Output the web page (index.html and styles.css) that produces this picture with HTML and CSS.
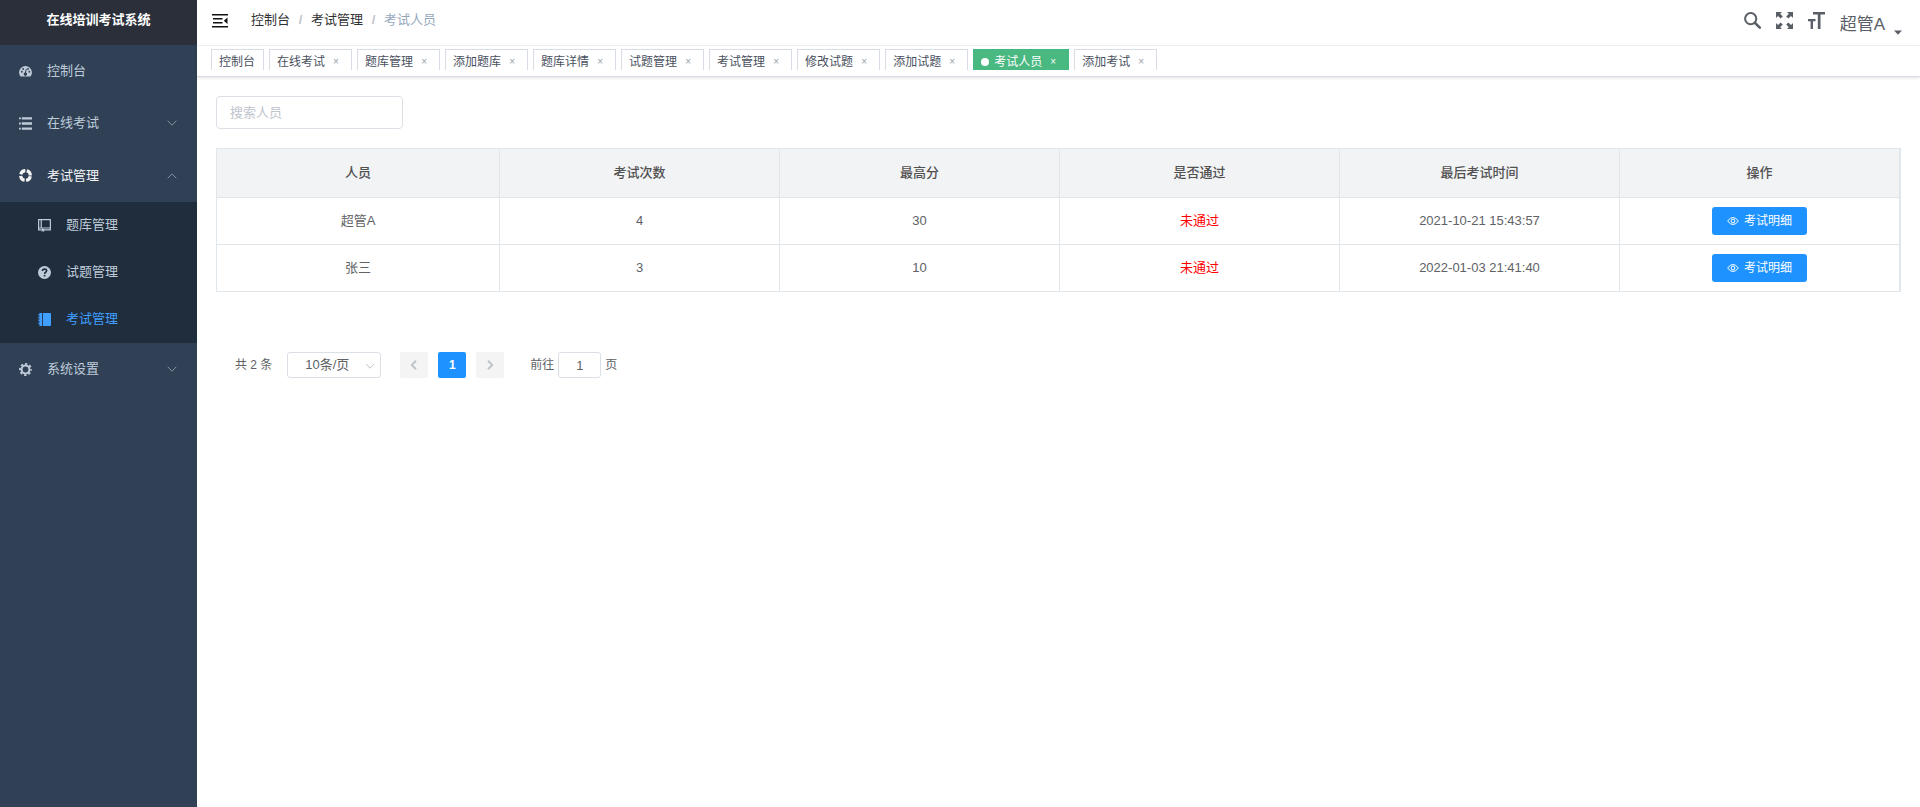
FILE: index.html
```html
<!DOCTYPE html>
<html lang="zh-CN">
<head>
<meta charset="utf-8">
<title>在线培训考试系统</title>
<link rel="stylesheet" href="styles.css">
</head>
<body>
<div class="app">
  <aside class="sidebar">
    <h1 class="logo">在线培训考试系统</h1>
    <nav class="menu">
      <a class="menu-item" href="#">
        <svg class="menu-icon" viewBox="0 0 14 14"><path fill="currentColor" fill-rule="evenodd" d="M1.6 12.2A6.9 6.9 0 1 1 12.4 12.2Q12.200 12.500 11.800 12.500H2.200Q1.800 12.500 1.600 12.200ZM2 7.300a1 1 0 1 0 2 0a1 1 0 1 0-2 0ZM3.500 4.300a1 1 0 1 0 2 0a1 1 0 1 0-2 0ZM8.700 4.300a1 1 0 1 0 2 0a1 1 0 1 0-2 0ZM10.200 7.300a1 1 0 1 0 2 0a1 1 0 1 0-2 0ZM7.500 4L6.400 8.200A1.700 1.700 0 1 0 7.600 8.300L8.300 4.200Z"/></svg>
        <span>控制台</span>
      </a>
      <a class="menu-item" href="#">
        <svg class="menu-icon" viewBox="0 0 14 14" fill="currentColor"><path d="M0 .5h2v2H0zM3 .2h11v2.600H3zM0 6h2v2H0zM3 5.700h11v2.600H3zM0 11.500h2v2H0zM3 11.200h11v2.600H3z"/></svg>
        <span>在线考试</span>
        <svg class="menu-arrow" viewBox="0 0 10 10"><path d="M.7 2.700L5 7.200L9.300 2.700"/></svg>
      </a>
      <a class="menu-item open" href="#">
        <svg class="menu-icon" viewBox="0 0 14 14"><circle cx="7" cy="7" r="5.200" fill="none" stroke="currentColor" stroke-width="3.400" stroke-dasharray="6.570 1.600" stroke-dashoffset="-0.800"/></svg>
        <span>考试管理</span>
        <svg class="menu-arrow" viewBox="0 0 10 10"><path d="M.7 7.300L5 2.800L9.300 7.300"/></svg>
      </a>
      <div class="submenu">
        <a class="menu-item" href="#">
          <svg class="menu-icon" viewBox="0 0 14 14"><path fill="none" stroke="currentColor" stroke-width="1.300" d="M4 11.800H.7V.7H13.300V9.700H.7M3.500.7V9.700M6 11.800H13.300V9.700"/><path fill="currentColor" d="M4 10.500h2.600V14L5.300 13L4 14z"/></svg>
          <span>题库管理</span>
        </a>
        <a class="menu-item" href="#">
          <svg class="menu-icon" viewBox="0 0 14 14"><circle cx="7" cy="7" r="7" fill="currentColor"/><path fill="none" stroke="#1f2d3d" stroke-width="1.700" d="M4.700 5.400Q4.800 3.400 7 3.400Q9.300 3.400 9.300 5.200Q9.300 6.200 8.200 6.800Q7.100 7.400 7.100 8.700"/><path fill="#1f2d3d" d="M6.200 9.600H8V11.300H6.200z"/></svg>
          <span>试题管理</span>
        </a>
        <a class="menu-item active" href="#">
          <svg class="menu-icon" viewBox="0 0 14 14" fill="currentColor"><path d="M5.200 0H13q1 0 1 1V13q0 1-1 1H5.200zM1.500 0H4.300V14H1.500zM0 1.700h3v1.100H0zM0 4.500h3v1.100H0zM0 7.300h3v1.100H0zM0 10.400h3v1.100H0z"/></svg>
          <span>考试管理</span>
        </a>
      </div>
      <a class="menu-item" href="#">
        <svg class="menu-icon" viewBox="0 0 14 14"><circle cx="7" cy="7" r="4.200" fill="none" stroke="currentColor" stroke-width="2.200"/><circle cx="7" cy="7" r="6" fill="none" stroke="currentColor" stroke-width="2" stroke-dasharray="2.500 2.212" stroke-dashoffset="1.250"/></svg>
        <span>系统设置</span>
        <svg class="menu-arrow" viewBox="0 0 10 10"><path d="M.7 2.700L5 7.200L9.300 2.700"/></svg>
      </a>
    </nav>
  </aside>

  <div class="main">
    <header class="navbar">
      <button class="icon-button" aria-label="收起菜单">
        <svg class="burger" viewBox="0 0 16 14"><path fill="#111" d="M0 0h16v1.500H0zM1 4h9.500v1.500H1zM1 8h9.500v1.500H1zM0 12h16v1.500H0zM15.500 3.500v6.500L11.800 6.700z"/></svg>
      </button>
      <nav class="breadcrumb" aria-label="面包屑">
        <a href="#">控制台</a><b>/</b><a href="#">考试管理</a><b>/</b><span>考试人员</span>
      </nav>
      <div class="tools">
        <button class="icon-button" aria-label="搜索">
          <svg class="tool-icon" viewBox="0 0 17 17"><circle cx="6.700" cy="6.700" r="5.600" fill="none" stroke="currentColor" stroke-width="2"/><path d="M10.800 10.800L15.800 15.600" stroke="currentColor" stroke-width="2.600" stroke-linecap="round"/></svg>
        </button>
        <button class="icon-button" aria-label="全屏">
          <svg class="tool-icon" viewBox="0 0 17 17"><path fill="currentColor" d="M0 0H6L4.200 1.800L6.800 4.400L4.600 6.600L2 4L0 6zM17 0V6L15 4L12.400 6.600L10.200 4.400L12.800 1.800L11 0zM0 17V11L2 13L4.600 10.400L6.800 12.600L4.200 15.200L6 17zM17 17H11L12.800 15.200L10.200 12.600L12.400 10.400L15 13L17 11z"/></svg>
        </button>
        <button class="icon-button" aria-label="字号">
          <svg class="tool-icon" viewBox="0 0 17 17"><path fill="currentColor" d="M5 0H17V2.500H12.500V17H9.800V2.500H5zM0 7H7.500V9.200H5V17H2.600V9.200H0z"/></svg>
        </button>
        <button class="user">超管A<svg class="caret" viewBox="0 0 8 5"><path d="M0 .5H8L4 4.800z" fill="currentColor"/></svg></button>
      </div>
    </header>

    <div class="tags-bar">
      <div class="tags">
        <a class="tag home" href="#">控制台</a>
        <a class="tag" href="#">在线考试<i>×</i></a>
        <a class="tag" href="#">题库管理<i>×</i></a>
        <a class="tag" href="#">添加题库<i>×</i></a>
        <a class="tag" href="#">题库详情<i>×</i></a>
        <a class="tag" href="#">试题管理<i>×</i></a>
        <a class="tag" href="#">考试管理<i>×</i></a>
        <a class="tag" href="#">修改试题<i>×</i></a>
        <a class="tag" href="#">添加试题<i>×</i></a>
        <a class="tag current" href="#">考试人员<i>×</i></a>
        <a class="tag" href="#">添加考试<i>×</i></a>
      </div>
    </div>

    <main class="content">
      <input class="search" type="text" placeholder="搜索人员" aria-label="搜索人员">
      <div class="table-wrap">
        <table class="table">
          <thead>
            <tr><th class="person">人员</th><th>考试次数</th><th>最高分</th><th>是否通过</th><th>最后考试时间</th><th>操作</th></tr>
          </thead>
          <tbody>
            <tr>
              <td>超管A</td><td>4</td><td>30</td><td class="fail">未通过</td><td>2021-10-21 15:43:57</td>
              <td><button class="detail"><svg viewBox="0 0 12 12"><path d="M.6 6Q6-1 11.400 6Q6 13 .6 6Z"/><circle cx="6" cy="6" r="1.900"/></svg>考试明细</button></td>
            </tr>
            <tr>
              <td>张三</td><td>3</td><td>10</td><td class="fail">未通过</td><td>2022-01-03 21:41:40</td>
              <td><button class="detail"><svg viewBox="0 0 12 12"><path d="M.6 6Q6-1 11.400 6Q6 13 .6 6Z"/><circle cx="6" cy="6" r="1.900"/></svg>考试明细</button></td>
            </tr>
          </tbody>
        </table>
      </div>

      <div class="pagination">
        <span>共 2 条</span>
        <div class="page-size">
          <select aria-label="每页条数"><option>10条/页</option></select>
          <svg viewBox="0 0 10 10"><path d="M1 3L5 7.200L9 3"/></svg>
        </div>
        <div class="pager">
          <button aria-label="上一页" disabled><svg viewBox="0 0 10 10"><path d="M7 .8L2.800 5L7 9.200"/></svg></button>
          <button class="current">1</button>
          <button aria-label="下一页" disabled><svg viewBox="0 0 10 10"><path d="M3 .8L7.200 5L3 9.200"/></svg></button>
        </div>
        <label class="jump">前往<input type="text" value="1">页</label>
      </div>
    </main>
  </div>
</div>
</body>
</html>
```
FILE: styles.css
```css
* {
  box-sizing: border-box;
}

body {
  margin: 0;
  background: #fff;
  color: #606266;
  font: 13px/20px "Liberation Sans", "Noto Sans CJK SC", sans-serif;
}

a {
  color: inherit;
  text-decoration: none;
}

button,
input,
select {
  margin: 0;
  padding: 0;
  border: 0;
  background: none;
  color: inherit;
  font: inherit;
}

svg {
  display: block;
  flex: none;
}

.app {
  display: flex;
  min-height: 100vh;
}

/* Sidebar */
.sidebar {
  flex: none;
  width: 197px;
  background: #304156;
}

.logo {
  margin: 0;
  height: 45px;
  background: #2b2f3a;
  color: #fff;
  font-size: 13px;
  line-height: 40px;
  text-align: center;
}

.menu-item {
  display: flex;
  align-items: center;
  gap: 15px;
  height: 52px;
  padding: 0 20px 0 19px;
  color: #bfcbd9;
}

.menu-item.open {
  height: 53px;
  color: #f4f4f5;
}

.menu-icon {
  width: 13px;
  height: 13px;
}

.menu-arrow {
  width: 10px;
  height: 10px;
  margin-left: auto;
  fill: none;
  stroke: #8291a3;
}

.submenu {
  background: #1f2d3d;
}

.submenu .menu-item {
  height: 47px;
  padding-bottom: 1px;
  padding-left: 38px;
}

.submenu .active {
  color: #409eff;
}

/* Top bar */
.main {
  flex: 1;
  min-width: 0;
}

.navbar {
  display: flex;
  align-items: flex-start;
  height: 46px;
  padding: 0 18px 0 15px;
  border-bottom: 1px solid #f2f3f4;
}

.icon-button {
  display: block;
  color: #5a5e66;
}

.burger {
  width: 16px;
  height: 14px;
  margin-top: 14px;
}

.breadcrumb {
  display: flex;
  margin: 10px 0 0 23px;
  color: #303133;
}

.breadcrumb b {
  margin: 0 8px;
  width: 5px;
  color: #c0c4cc;
  text-align: center;
}

.breadcrumb span {
  color: #97a8be;
}

.tools {
  display: flex;
  align-items: flex-start;
  gap: 15px;
  margin-left: auto;
}

.tool-icon {
  width: 17px;
  height: 17px;
  margin-top: 12px;
}

.user {
  display: flex;
  align-items: flex-end;
  gap: 9px;
  height: 35px;
  color: #5a5e66;
  font-size: 17px;
}

.caret {
  width: 8px;
  height: 5px;
}

/* Open page tags */
.tags-bar {
  height: 31px;
  padding: 3px 14px 0;
  border-bottom: 1px solid #d8dce5;
  box-shadow: 0 1px 3px rgba(0, 0, 0, 0.12);
}

.tags {
  display: flex;
  gap: 5px;
  height: 21px;
  overflow: hidden;
}

.tag {
  display: flex;
  align-items: center;
  flex: none;
  height: 25px;
  padding: 0 7px;
  border: 1px solid #d8dce5;
  color: #495060;
  font-size: 12px;
}

.tag.home {
  padding-right: 8px;
}

.tag i {
  width: 16px;
  margin-left: 3px;
  color: #999ea8;
  font-size: 10px;
  font-style: normal;
  text-align: center;
}

.tag.current {
  border-color: #42b983;
  background: #4ab881;
  color: #fff;
}

.tag.current i {
  color: #fff;
}

.tag.current::before {
  content: "";
  width: 8px;
  height: 8px;
  margin-right: 5px;
  border-radius: 50%;
  background: #fff;
}

/* Content */
.content {
  padding: 19px;
}

.search {
  display: block;
  width: 187px;
  height: 33px;
  padding: 0 13px;
  border: 1px solid #dcdfe6;
  border-radius: 4px;
}

.search::placeholder {
  color: #c0c4cc;
}

.table-wrap {
  margin-top: 19px;
  border: 1px solid #dfe6ec;
  border-bottom: 0;
}

.table {
  width: 100%;
  border-spacing: 0;
  table-layout: fixed;
}

.table th,
.table td {
  height: 47px;
  padding: 0;
  border-right: 1px solid #dfe6ec;
  border-bottom: 1px solid #dfe6ec;
  text-align: center;
}

.table th {
  height: 49px;
  background: #f1f3f5;
  color: #515151;
  font-weight: 500;
}

.table .person {
  width: 283px;
}

.table .fail {
  color: #f00;
}

.detail {
  display: flex;
  align-items: center;
  gap: 5px;
  height: 28px;
  margin: 0 auto;
  padding: 0 15px;
  border-radius: 3px;
  background: #1e93ff;
  color: #fff;
  font-size: 12px;
}

.detail svg {
  width: 12px;
  height: 12px;
  fill: none;
  stroke: currentColor;
}

/* Pagination */
.pagination {
  display: flex;
  align-items: center;
  height: 26px;
  margin: 60px 0 0 19px;
  font-size: 12px;
}

.page-size {
  position: relative;
  margin-left: 15px;
}

.page-size select {
  display: block;
  width: 94px;
  height: 26px;
  padding: 0 14px 0 0;
  border: 1px solid #dcdfe6;
  border-radius: 3px;
  appearance: none;
  font-size: 13px;
  text-align: center;
  text-align-last: center;
}

.page-size svg {
  position: absolute;
  top: 9px;
  right: 6px;
  width: 10px;
  height: 10px;
  fill: none;
  stroke: #c0c4cc;
  pointer-events: none;
}

.pager {
  display: flex;
  gap: 10px;
  margin: 0 26px 0 19px;
}

.pager button {
  display: flex;
  align-items: center;
  justify-content: center;
  width: 28px;
  height: 26px;
  border-radius: 2px;
  background: #f4f4f5;
  font-weight: 700;
}

.pager .current {
  background: #1e93ff;
  color: #fff;
}

.pager svg {
  width: 10px;
  height: 10px;
  fill: none;
  stroke: #c0c4cc;
  stroke-width: 2;
}

.jump {
  display: flex;
  align-items: center;
  gap: 4px;
}

.jump input {
  width: 43px;
  height: 26px;
  border: 1px solid #dcdfe6;
  border-radius: 3px;
  font-size: 13px;
  text-align: center;
}
```
